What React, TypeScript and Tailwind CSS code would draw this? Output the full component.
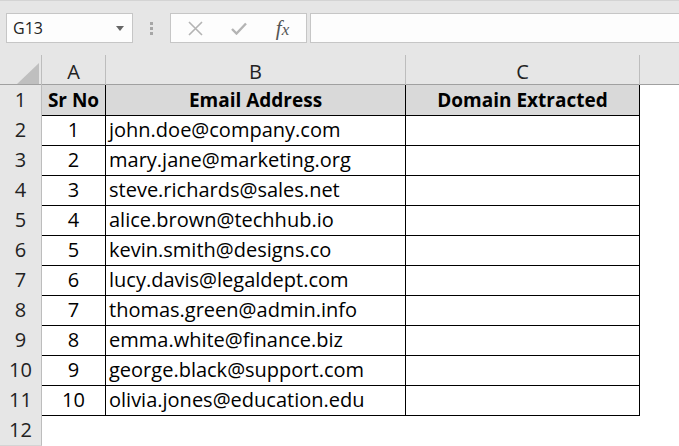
import React from 'react';

const rows = [
  'john.doe@company.com',
  'mary.jane@marketing.org',
  'steve.richards@sales.net',
  'alice.brown@techhub.io',
  'kevin.smith@designs.co',
  'lucy.davis@legaldept.com',
  'thomas.green@admin.info',
  'emma.white@finance.biz',
  'george.black@support.com',
  'olivia.jones@education.edu',
];

const grid = 'grid grid-cols-[42px_64px_300px_234px_1fr] h-[30px]';
const rowHead = 'bg-[#e6e6e6] border-r border-b border-r-[#bdbdbd] border-b-[#d4d4d4] flex items-center justify-center text-[#222] text-[20px]';
const cell = 'border-r border-b border-black flex items-center';

export default function App() {
  return (
    <div className="w-[679px] h-[446px] overflow-hidden bg-white text-[20px] text-black" style={{ fontFamily: '"Open Sans", "Noto Sans", sans-serif' }}>
      {/* Formula bar */}
      <div className="h-[55px] bg-[#e6e6e6] border-t border-[#d4d4d4] flex items-start pt-[12px] pl-[6px]">
        <div className="w-[127px] h-[30px] bg-[#fdfdfd] border border-[#c6c6c6] flex items-center justify-between pl-[6px] pr-[8px] text-[16px] text-[#222]">
          <span>G13</span>
          <svg width="8" height="5" viewBox="0 0 8 5"><path d="M0 0h8L4 5z" fill="#666" /></svg>
        </div>
        <div className="w-[37px] h-[30px] flex flex-col items-center justify-center gap-[2px]">
          <span className="w-[3px] h-[3px] bg-[#a6a6a6]" />
          <span className="w-[3px] h-[3px] bg-[#a6a6a6]" />
          <span className="w-[3px] h-[3px] bg-[#a6a6a6]" />
        </div>
        <div className="w-[137px] h-[30px] bg-[#fdfdfd] border border-[#c6c6c6] flex items-center">
          <div className="w-[45px] flex justify-center pl-[4px]">
            <svg width="15" height="15" viewBox="0 0 15 15"><path d="M1 1l13 13M14 1L1 14" stroke="#b4b4b4" strokeWidth="1.6" /></svg>
          </div>
          <div className="w-[45px] flex justify-center">
            <svg width="16" height="13" viewBox="0 0 16 13"><path d="M1 7l4.5 4.5L15 1.5" stroke="#b4b4b4" strokeWidth="2.4" fill="none" /></svg>
          </div>
          <div className="w-[45px] flex justify-center pr-[2px]">
            <span className="italic text-[#555] text-[21px] leading-none" style={{ fontFamily: '"Liberation Serif", serif' }}>
              f<span className="text-[17px]">x</span>
            </span>
          </div>
        </div>
        <div className="ml-[3px] flex-1 h-[30px] bg-[#fdfdfd] border border-[#c6c6c6] border-r-0" />
      </div>

      {/* Column headers */}
      <div className={`${grid} bg-[#e6e6e6] border-b border-[#a0a0a0] text-[#222]`}>
        <div className="relative border-r border-[#bdbdbd]">
          <svg className="absolute right-[2px] bottom-[3px]" width="22" height="21" viewBox="0 0 22 21"><path d="M22 0v21H0z" fill="#bfbfbf" /></svg>
        </div>
        <div className="border-r border-[#bdbdbd] flex items-center justify-center pt-[2px]">A</div>
        <div className="border-r border-[#bdbdbd] flex items-center justify-center pt-[2px]">B</div>
        <div className="border-r border-[#bdbdbd] flex items-center justify-center pt-[2px]">C</div>
        <div />
      </div>

      {/* Row 1 */}
      <div className={grid}>
        <div className={rowHead}>1</div>
        <div className={`${cell} bg-[#d9d9d9] justify-center font-bold text-[19px]`}>Sr No</div>
        <div className={`${cell} bg-[#d9d9d9] justify-center font-bold text-[19px]`}>Email Address</div>
        <div className={`${cell} bg-[#d9d9d9] justify-center font-bold text-[19px]`}>Domain Extracted</div>
        <div />
      </div>

      {rows.map((email, i) => (
        <div key={email} className={grid}>
          <div className={rowHead}>{i + 2}</div>
          <div className={`${cell} justify-center`}>{i + 1}</div>
          <div className={`${cell} pl-[3px]`}>{email}</div>
          <div className={cell} />
          <div />
        </div>
      ))}

      <div className={grid}>
        <div className={rowHead}>12</div>
        <div />
        <div />
        <div />
        <div />
      </div>
    </div>
  );
}
